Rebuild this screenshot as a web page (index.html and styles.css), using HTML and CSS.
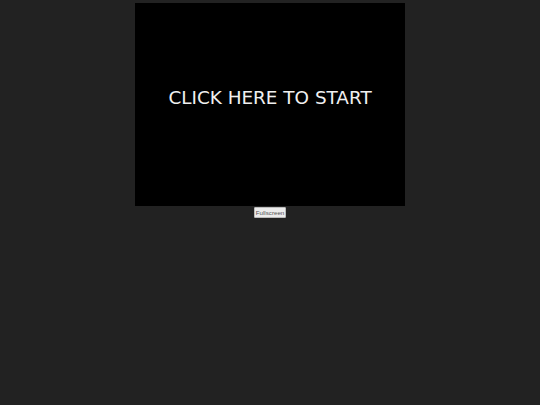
FILE: index.html
```html
<!DOCTYPE html>
<html>
<head>
<meta charset="utf-8">
<link rel="stylesheet" href="styles.css">
</head>
<body>
<div class="wrap">
  <div class="screen"><span class="start">CLICK HERE TO START</span></div>
  <button class="fs">Fullscreen</button>
</div>
</body>
</html>
```
FILE: styles.css
```css
html, body { margin: 0; padding: 0; background: #222222; }
body { height: 405px; overflow: hidden; }
.wrap { display: flex; flex-direction: column; align-items: center; padding-top: 3px; gap: 1px; }
.screen { width: 270px; height: 203px; background: #000; display: flex; justify-content: center; padding-top: 83px; box-sizing: border-box; }
.start { color: #f0f0f0; font-family: "DejaVu Sans", sans-serif; font-size: 18.4px; line-height: 24px; }
.fs { font-family: "Liberation Sans", Arial, sans-serif; font-size: 6.2px; padding: 0; margin: 0; width: 32px; background: #ececec; color: #555; border: 1px solid #bbb; border-radius: 1px; height: 11px; line-height: 9px; text-align: center; }
```
